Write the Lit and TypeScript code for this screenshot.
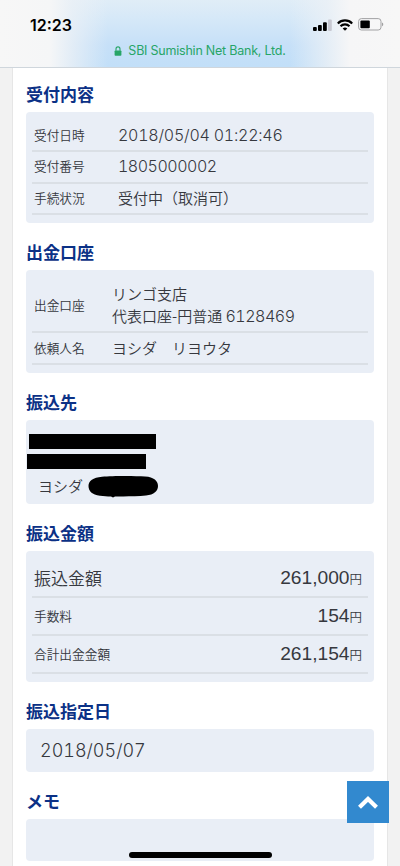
import { LitElement, html, css } from "lit";
import { customElement } from "lit/decorators.js";

@customElement("status-bar")
class StatusBar extends LitElement {
  static styles = css`
    :host {
      display: block;
      height: 68px;
      box-sizing: border-box;
      border-bottom: 1px solid #cfd6dc;
      background:
        linear-gradient(90deg, #f7f7f7 0, #f5f6f7 50px, rgba(236, 241, 246, 0.75) 72px, rgba(215, 232, 247, 0) 108px, rgba(215, 232, 247, 0) 290px, rgba(236, 241, 246, 0.8) 328px, #f6f6f7 350px, #f7f7f7 400px),
        linear-gradient(180deg, #e0edf7 0, #d5e8f8 20px, #c6e0f8 45px, #c2dff8 67px);
    }
    .top { display: flex; justify-content: space-between; height: 42px; padding: 7px 16px 0 30px; box-sizing: border-box; align-items: center; }
    .time { font: 600 16px/20px Inter, sans-serif; color: #000; }
    .icons { display: flex; gap: 5px; align-items: center; }
    svg { display: block; }
    .site { display: flex; justify-content: center; align-items: center; gap: 6px; height: 17px; font: 400 12.5px/17px Inter, sans-serif; letter-spacing: -0.22px; color: #27a567; }
  `;
  render() {
    return html`
      <div class="top">
        <span class="time">12:23</span>
        <span class="icons">
          <svg width="19" height="12" viewBox="0 0 19 12">
            <rect x="0" y="8" width="3.8" height="4" rx="1" />
            <rect x="5" y="6" width="3.8" height="6" rx="1" />
            <rect x="10" y="3.3" width="3.8" height="8.7" rx="1" />
            <rect x="15" y="0.5" width="3.8" height="11.5" rx="1" fill="#c8c9d2" />
          </svg>
          <svg width="16" height="12" viewBox="0 0 16 12" fill="none" stroke="#000" stroke-width="2.1">
            <path d="M.8 4.4a10.2 10.2 0 0 1 14.4 0M3.5 7.2a6.4 6.4 0 0 1 9 0" />
            <path d="M8 11.8 5.7 9.5a3.3 3.3 0 0 1 4.6 0Z" fill="#000" stroke="none" />
          </svg>
          <svg width="26" height="13" viewBox="0 0 26 13">
            <rect x=".6" y=".6" width="22.4" height="11.4" rx="2.8" fill="none" stroke="#a2a2a4" />
            <rect x="2.4" y="2.4" width="9.4" height="7.8" rx="1" />
            <path d="M24.2 4.5c1.4.5 1.4 3.2 0 3.7Z" fill="#8c8c8e" />
          </svg>
        </span>
      </div>
      <div class="site">
        <svg width="8" height="10" viewBox="0 0 8 10">
          <rect x=".6" y="4.4" width="6.8" height="5.4" rx=".8" fill="#27a567" />
          <path d="M2 4.8V2.9a2 2 0 0 1 4 0v1.9" fill="none" stroke="#27a567" stroke-width="1.1" />
        </svg>
        <span>SBI Sumishin Net Bank, Ltd.</span>
      </div>
    `;
  }
}

@customElement("info-section")
class InfoSection extends LitElement {
  static properties = { heading: {} };
  declare heading: string;
  static styles = css`
    :host { display: block; }
    h2 { margin: 0; padding: 12px 0 1px; font-size: 17px; line-height: 34px; font-weight: 700; color: #0b3186; }
    .card { background: #e9eef6; border-radius: 4px; padding: 0 6px; }
  `;
  render() {
    return html`<h2>${this.heading}</h2><div class="card"><slot></slot></div>`;
  }
}

@customElement("app-root")
class AppRoot extends LitElement {
  static styles = css`
    :host {
      display: flex;
      flex-direction: column;
      position: relative;
      height: 866px;
      overflow: hidden;
      background: #f2f2f2;
      font-family: "Noto Sans CJK JP", sans-serif;
      color: #36383e;
    }
    main {
      box-sizing: border-box;
      flex: 1;
      margin: 0 12px;
      padding: 0 13px;
      background: #fff;
      border: solid #e6e6e6;
      border-width: 0 1px;
    }
    .first { margin-top: -3px; }
    .rows { display: flex; flex-direction: column; box-sizing: border-box; font-weight: 350; }
    .row { display: flex; align-items: center; box-sizing: border-box; border-bottom: 2px solid #dadfe5; padding: 0 6px 0 2px; height: 31.5px; }
    .label { font-size: 12.7px; line-height: 18px; width: 84px; }
    .value { font-size: 15px; line-height: 22px; }
    .num { font-family: Inter, sans-serif; font-size: 16px; font-weight: 300; font-variant-numeric: tabular-nums; letter-spacing: -0.48px; }
    .stamp { letter-spacing: -0.23px; }
    .reception { height: 111px; padding-top: 8.5px; }
    .reception .row { padding-bottom: 1px; }
    .withdraw { height: 103px; padding-top: 12px; }
    .withdraw .label { width: 78px; }
    .tall { height: 51px; padding-bottom: 3px; }
    .payee { height: 84px; padding: 12px 0 0 6px; display: flex; flex-direction: column; gap: 5px; box-sizing: border-box; font-weight: 350; }
    .mask { width: 127px; height: 15px; margin: 2px 0 0 -9px; background: #000; }
    .mask.second { width: 119px; height: 15px; margin: 0 0 0 -11px; }
    .name { display: flex; align-items: center; gap: 5px; font-size: 15px; line-height: 22px; margin-top: -1px; }
    .name svg { display: block; margin-top: 2px; }
    .amounts { height: 131px; padding-top: 9px; }
    .amounts .row { height: 38px; justify-content: space-between; }
    .amounts .label { width: auto; margin-top: -1px; }
    .amounts .big { font-size: 17px; line-height: 24px; }
    .money { display: flex; align-items: baseline; font: 400 19.2px/24px "Liberation Sans", "Noto Sans CJK JP", sans-serif; }
    .yen { font: 350 12.5px/20px "Noto Sans CJK JP", sans-serif; }
    .date { height: 42.5px; padding-left: 8px; font-size: 18px; line-height: 44px; font-weight: 300; font-family: Inter, sans-serif; font-variant-numeric: tabular-nums; }
    .memo { height: 42px; }
    .to-top { position: absolute; left: 347px; top: 781px; width: 42px; height: 42px; background: #3289cf; }
    .to-top svg { display: block; }
    .home { position: absolute; left: 129px; top: 852px; width: 143px; height: 5.5px; border-radius: 3px; background: #000; }
  `;
  render() {
    return html`
      <status-bar></status-bar>
      <main>
        <info-section class="first" heading="受付内容">
          <div class="rows reception">
            <div class="row"><span class="label">受付日時</span><span class="value num stamp">2018/05/04 01:22:46</span></div>
            <div class="row"><span class="label">受付番号</span><span class="value num">1805000002</span></div>
            <div class="row"><span class="label">手続状況</span><span class="value">受付中（取消可）</span></div>
          </div>
        </info-section>
        <info-section heading="出金口座">
          <div class="rows withdraw">
            <div class="row tall"><span class="label">出金口座</span><span class="value">リンゴ支店<br />代表口座-円普通 <span class="num">6128469</span></span></div>
            <div class="row"><span class="label">依頼人名</span><span class="value">ヨシダ　リヨウタ</span></div>
          </div>
        </info-section>
        <info-section heading="振込先">
          <div class="payee">
            <div class="mask"></div>
            <div class="mask second"></div>
            <div class="name">
              <span>ヨシダ</span>
              <svg width="71" height="23" viewBox="0 0 71 23">
                <path d="M14 1.8C25 .8 47 .8 57 1.6c9 .6 13 4.4 13 9.4s-4 8.6-12 9.6c-10 1-22 .8-31 .8l-2 1.2-2-1.2c-4 0-7-.2-11-.7C4 19.800.5 16 .5 11S5 2.600 14 1.8Z" />
              </svg>
            </div>
          </div>
        </info-section>
        <info-section heading="振込金額">
          <div class="rows amounts">
            <div class="row"><span class="label big">振込金額</span><span class="money">261,000<span class="yen">円</span></span></div>
            <div class="row"><span class="label">手数料</span><span class="money">154<span class="yen">円</span></span></div>
            <div class="row"><span class="label">合計出金金額</span><span class="money">261,154<span class="yen">円</span></span></div>
          </div>
        </info-section>
        <info-section heading="振込指定日"><div class="date">2018/05/07</div></info-section>
        <info-section heading="メモ"><div class="memo"></div></info-section>
      </main>
      <div class="to-top">
        <svg width="42" height="42" viewBox="0 0 42 42" fill="none" stroke="#fff" stroke-width="4.2">
          <path d="M12.500 26.200 21 18l8.500 8.200" />
        </svg>
      </div>
      <div class="home"></div>
    `;
  }
}
